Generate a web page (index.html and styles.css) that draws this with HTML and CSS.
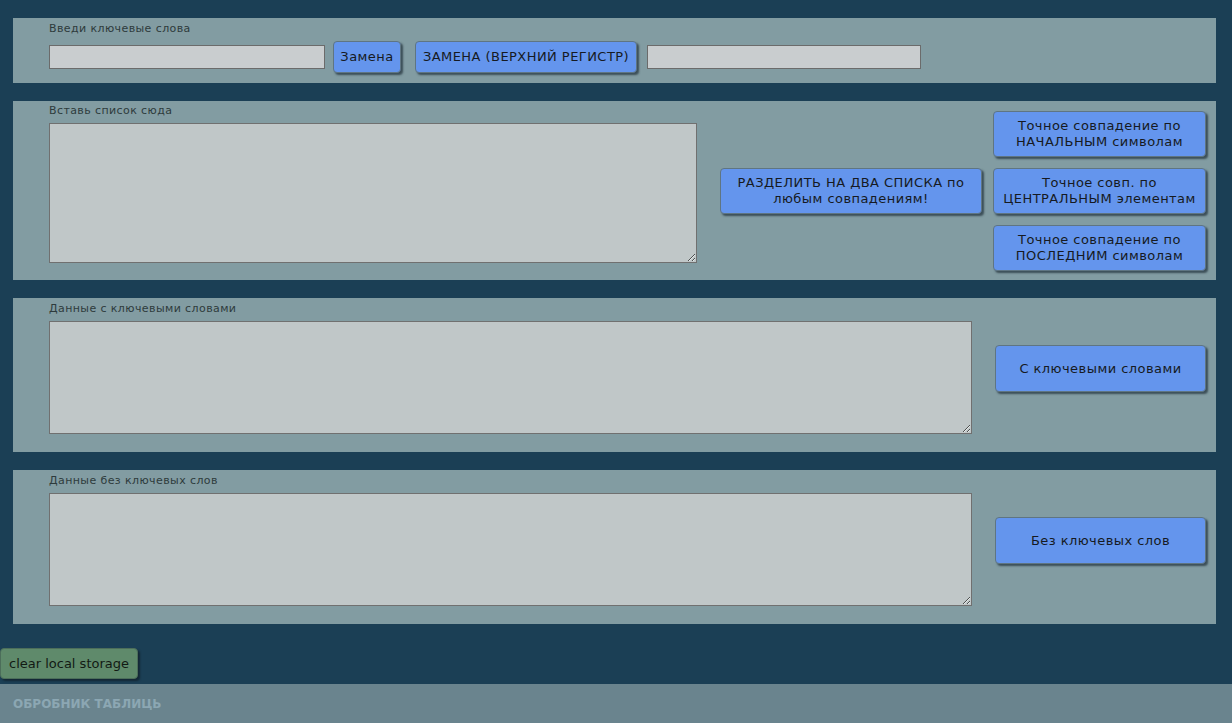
FILE: index.html
```html
<!DOCTYPE html>
<html lang="ru">
<head>
<meta charset="utf-8">
<title>Обробник таблиць</title>
<link rel="stylesheet" href="styles.css">
</head>
<body>
<main class="wrap">
  <section class="panel panel-top">
    <div class="label">Введи ключевые слова</div>
    <div class="row">
      <input class="field" type="text">
      <button class="btn btn-small">Замена</button>
      <button class="btn btn-upper">ЗАМЕНА (ВЕРХНИЙ РЕГИСТР)</button>
      <input class="field field-b" type="text">
    </div>
  </section>

  <section class="panel panel-list">
    <div class="col">
      <div class="label">Вставь список сюда</div>
      <textarea class="area area-list"></textarea>
    </div>
    <button class="btn btn-split">РАЗДЕЛИТЬ НА ДВА СПИСКА по любым совпадениям!</button>
    <div class="stack">
      <button class="btn btn-match">Точное совпадение по НАЧАЛЬНЫМ символам</button>
      <button class="btn btn-match">Точное совп. по ЦЕНТРАЛЬНЫМ элементам</button>
      <button class="btn btn-match">Точное совпадение по ПОСЛЕДНИМ символам</button>
    </div>
  </section>

  <section class="panel panel-data">
    <div class="col">
      <div class="label">Данные с ключевыми словами</div>
      <textarea class="area area-data"></textarea>
    </div>
    <button class="btn btn-data">С ключевыми словами</button>
  </section>

  <section class="panel panel-data">
    <div class="col">
      <div class="label">Данные без ключевых слов</div>
      <textarea class="area area-data"></textarea>
    </div>
    <button class="btn btn-data">Без ключевых слов</button>
  </section>
</main>
<button class="btn-clear">clear local storage</button>
<footer class="footer">ОБРОБНИК ТАБЛИЦЬ</footer>
</body>
</html>
```
FILE: styles.css
```css
* { box-sizing: border-box; }
html, body { margin: 0; padding: 0; }
body {
  background: #1b3f55;
  font-family: "DejaVu Sans", "Open Sans", sans-serif;
  color: #1e1e1e;
  width: 1232px;
  height: 723px;
  overflow: hidden;
}
.wrap {
  padding: 18px 16px 0 13px;
  display: flex;
  flex-direction: column;
  gap: 18px;
}
.panel {
  background: #829ca2;
  padding-left: 36px;
}
.label {
  font-size: 11px;
  line-height: 14px;
  letter-spacing: 0.4px;
  color: #2e3b3c;
}
.panel-top {
  height: 65px;
  padding-top: 4px;
}
.row {
  display: flex;
  align-items: center;
  margin-top: 5px;
  height: 32px;
}
.field {
  width: 276px;
  height: 24px;
  border: 1px solid #6b6b6b;
  background: #c9cdcf;
  margin: 0;
  padding: 0 4px;
}
.field-b { width: 274px; }
.btn {
  background: #6495ed;
  border: 1px solid #5f7582;
  border-radius: 4px;
  box-shadow: 2px 2px 2px rgba(30, 45, 55, 0.7);
  font-family: inherit;
  font-size: 13px;
  letter-spacing: 0.45px;
  line-height: 16px;
  color: #161a22;
  padding: 0 3px;
  margin: 0;
  cursor: pointer;
}
.btn-small { width: 68px; height: 32px; margin-left: 8px; white-space: nowrap; padding: 0; }
.btn-upper { width: 222px; height: 32px; margin-left: 14px; margin-right: 10px; white-space: nowrap; padding: 0; }

.panel-list {
  height: 179px;
  display: flex;
  align-items: center;
  padding-right: 10px;
}
.col { align-self: flex-start; }
.panel-list .col { padding-top: 3px; }
.area {
  display: block;
  margin-top: 5px;
  border: 1px solid #707070;
  background: #c0c7c8;
  resize: both;
  padding: 2px;
  font-family: inherit;
}
.area-list { width: 648px; height: 140px; }
.btn-split { width: 262px; height: 46px; margin-left: 23px; }
.stack {
  margin-left: 11px;
  display: flex;
  flex-direction: column;
  gap: 11px;
}
.btn-match { width: 213px; height: 46px; }

.panel-data {
  height: 154px;
  display: flex;
  align-items: flex-start;
  padding-top: 4px;
}
.area-data { width: 923px; height: 113px; }
.btn-data { width: 211px; height: 47px; margin-left: 23px; margin-top: 43px; }

.btn-clear {
  display: block;
  margin: 24px 0 0 0;
  width: 138px;
  height: 31px;
  background: #5f8a6b;
  border: 1px solid #4c6e5a;
  border-radius: 4px;
  box-shadow: 2px 2px 2px rgba(15, 30, 40, 0.7);
  font-family: inherit;
  font-size: 13px;
  color: #121a14;
  padding: 0;
}
.footer {
  margin-top: 5px;
  height: 40px;
  background: #6a848e;
  color: #8ca7b3;
  font-weight: 700;
  font-size: 12px;
  line-height: 40px;
  padding-left: 13px;
}
```
